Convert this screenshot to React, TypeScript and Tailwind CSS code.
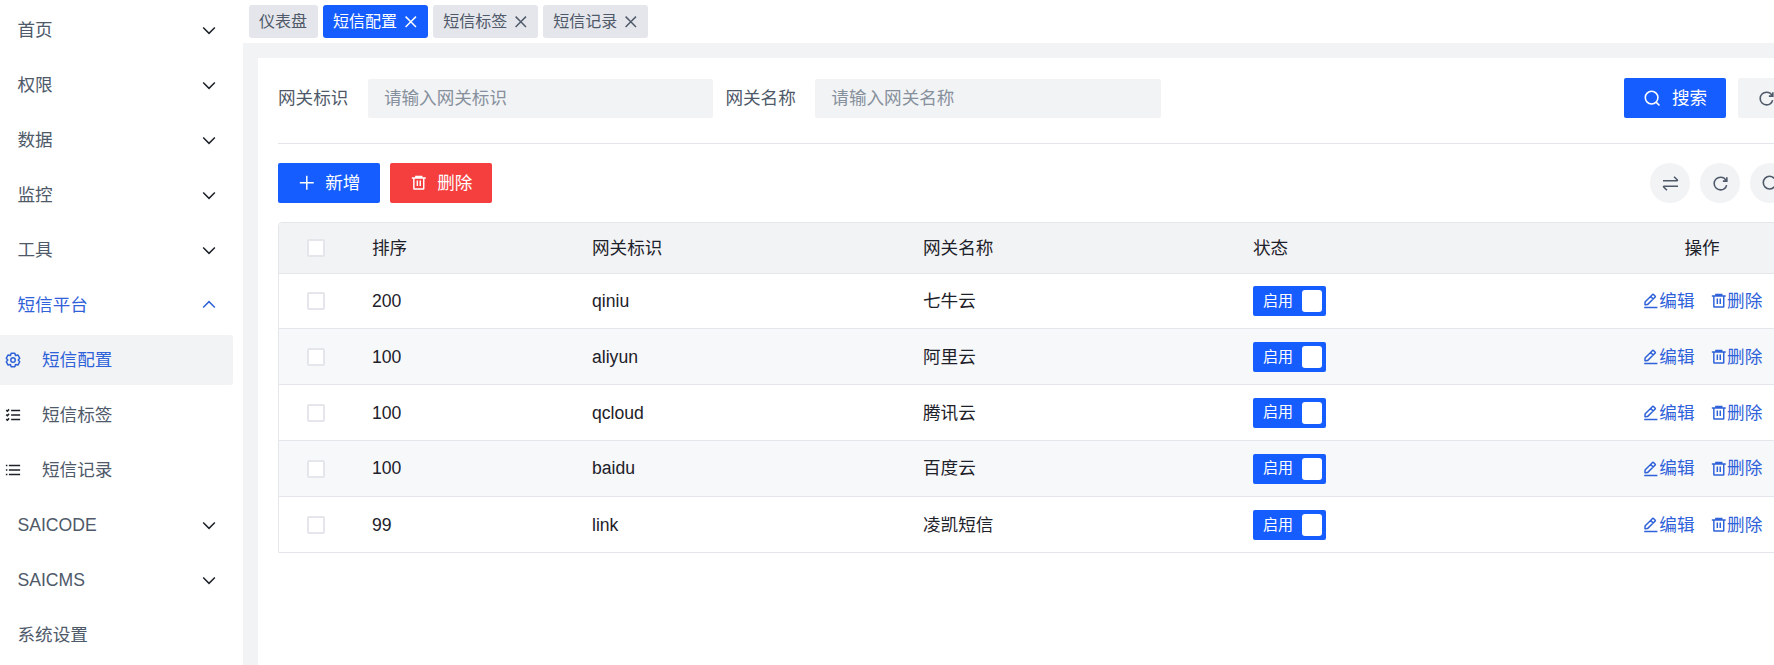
import type { ReactNode } from 'react'

const FONT = "font-['Liberation_Sans','Noto_Sans_CJK_SC',sans-serif]"

const ICONS: Record<string, ReactNode> = {
  down: <path d="M39.6 17.443 24.043 33 8.487 17.443" />,
  up: <path d="M39.6 30.557 24.043 15 8.487 30.557" />,
  close: <path d="M9.857 9.858 24 24m0 0 14.142 14.142M24 24 38.142 9.858M24 24 9.857 38.142" />,
  plus: <path d="M5 24h38M24 5v38" />,
  trash: (
    <path d="M5 11h5.5m0 0v29a1 1 0 0 0 1 1h25a1 1 0 0 0 1-1V11m-27 0H16m21.5 0H43m-5.5 0H32m-16 0V7h16v4m-16 0h16M20 18v15m8-15v15" />
  ),
  search: (
    <path d="M33.072 33.071c6.248-6.248 6.248-16.379 0-22.627-6.249-6.249-16.38-6.249-22.628 0-6.248 6.248-6.248 16.379 0 22.627 6.248 6.248 16.38 6.248 22.628 0Zm0 0 8.485 8.485" />
  ),
  refresh: (
    <path d="M38.837 18C36.463 12.136 30.715 8 24 8 15.163 8 8 15.163 8 24s7.163 16 16 16c7.455 0 13.72-5.1 15.496-12M40 8v10H30" />
  ),
  swap: (
    <path d="M5 17h35.586c.89 0 1.337-1.077.707-1.707L33 7M43 31H7.414c-.89 0-1.337 1.077-.707 1.707L15 41" />
  ),
  edit: (
    <path d="m30.48 19.038 5.733-5.734a1 1 0 0 0 0-1.414l-5.586-5.586a1 1 0 0 0-1.414 0l-5.734 5.734m7 7L15.763 33.754a1 1 0 0 1-.59.286l-6.048.708a1 1 0 0 1-1.113-1.069l.477-6.31a1 1 0 0 1 .29-.631l14.7-14.7m7 7-7-7M6 42h36" />
  ),
  settings: (
    <>
      <path d="M18.797 6.732A1 1 0 0 1 19.76 6h8.48a1 1 0 0 1 .964.732l1.285 4.628a1 1 0 0 0 1.213.7l4.651-1.2a1 1 0 0 1 1.116.468l4.24 7.344a1 1 0 0 1-.153 1.2L38.193 23.3a1 1 0 0 0 0 1.402l3.364 3.427a1 1 0 0 1 .153 1.2l-4.24 7.344a1 1 0 0 1-1.116.468l-4.65-1.2a1 1 0 0 0-1.214.7l-1.285 4.628a1 1 0 0 1-.964.732h-8.48a1 1 0 0 1-.963-.732L17.51 36.64a1 1 0 0 0-1.213-.7l-4.65 1.2a1 1 0 0 1-1.116-.468l-4.24-7.344a1 1 0 0 1 .153-1.2L9.809 24.7a1 1 0 0 0 0-1.402l-3.364-3.427a1 1 0 0 1-.153-1.2l4.24-7.344a1 1 0 0 1 1.116-.468l4.65 1.2a1 1 0 0 0 1.213-.7l1.286-4.628Z" />
      <path d="M30 24a6 6 0 1 1-12 0 6 6 0 0 1 12 0Z" />
    </>
  ),
  list: <path d="M13 24h30M5 12h4m4 24h30M13 12h30M5 24h4M5 36h4" />,
  checklist: <path d="M19 12h24M19 24h24M19 36h24M6 11l3 3 4.5-5M6 23l3 3 4.5-5M6 35l3 3 4.5-5" />,
}

function Icon({ name, className = 'size-[18px]' }: { name: string; className?: string }) {
  return (
    <svg viewBox="0 0 48 48" fill="none" stroke="currentColor" strokeWidth={4} className={`shrink-0 ${className}`}>
      {ICONS[name]}
    </svg>
  )
}

const topMenus = ['首页', '权限', '数据', '监控', '工具']
const subMenus = [
  { label: '短信配置', icon: 'settings', active: true },
  { label: '短信标签', icon: 'checklist', active: false },
  { label: '短信记录', icon: 'list', active: false },
]
const rows = [
  { sort: 200, code: 'qiniu', name: '七牛云' },
  { sort: 100, code: 'aliyun', name: '阿里云' },
  { sort: 100, code: 'qcloud', name: '腾讯云' },
  { sort: 100, code: 'baidu', name: '百度云' },
  { sort: 99, code: 'link', name: '凌凯短信' },
]

function MenuItem({ label, open, noArrow }: { label: string; open?: boolean; noArrow?: boolean }) {
  return (
    <div
      className={`flex h-[50px] items-center justify-between pr-[15px] pl-[17.5px] ${open ? 'text-[#2f62d9]' : 'text-[#4e5969]'}`}
    >
      <span>{label}</span>
      {!noArrow && <Icon name={open ? 'up' : 'down'} className={`size-[18px] ${open ? '' : 'text-[#1d2129]'}`} />}
    </div>
  )
}

function Sidebar() {
  return (
    <aside className="flex w-[243px] shrink-0 flex-col gap-[5px] bg-white pt-[5px] pr-[10px] text-[17.6px]">
      {topMenus.map((m) => (
        <MenuItem key={m} label={m} />
      ))}
      <MenuItem label="短信平台" open />
      {subMenus.map((s) => (
        <div
          key={s.label}
          className={`flex h-[50px] items-center gap-[20px] rounded-r-[3px] pl-[4px] ${
            s.active ? 'bg-[#f2f3f5] text-[#2f62d9]' : 'text-[#4e5969]'
          }`}
        >
          <Icon name={s.icon} className={`size-[18px] ${s.active ? '' : 'text-[#1d2129]'}`} />
          <span>{s.label}</span>
        </div>
      ))}
      <MenuItem label="SAICODE" />
      <MenuItem label="SAICMS" />
      <MenuItem label="系统设置" noArrow />
    </aside>
  )
}

function Tab({ label, active, closable = true }: { label: string; active?: boolean; closable?: boolean }) {
  return (
    <div
      className={`flex h-[33px] items-center gap-[4.5px] rounded-[3px] pr-[9px] pl-[10px] text-[16px] ${
        active ? 'bg-[#165dff] text-white' : 'bg-[#e5e6eb] text-[#4e5969]'
      } ${closable ? '' : 'pr-[11px]'}`}
    >
      <span>{label}</span>
      {closable && <Icon name="close" className="size-[17.6px]" />}
    </div>
  )
}

function Field({ label, placeholder }: { label: string; placeholder: string }) {
  return (
    <div className="flex items-center gap-[19.5px]">
      <span className="text-[#4e5969]">{label}</span>
      <div className="flex h-[39px] w-[345.5px] items-center rounded-[2px] bg-[#f2f3f5] pl-[16px] text-[#86909c]">
        {placeholder}
      </div>
    </div>
  )
}

function Button({
  icon,
  label,
  className,
  iconClass = 'size-[17.6px]',
}: {
  icon: string
  label: string
  className: string
  iconClass?: string
}) {
  return (
    <button className={`flex h-[40px] w-[102px] items-center justify-center gap-[10px] rounded-[2px] ${className}`}>
      <Icon name={icon} className={iconClass} />
      <span>{label}</span>
    </button>
  )
}

function RoundButton({ icon }: { icon: string }) {
  return (
    <div className="flex size-[40px] items-center justify-center rounded-full bg-[#f2f3f5] text-[#4e5969]">
      <Icon name={icon} className="size-[19px]" />
    </div>
  )
}

function Check() {
  return <div className="mx-auto size-[18px] rounded-[2px] border-2 border-[#e5e6eb] bg-white" />
}

function Table() {
  return (
    <div className="mt-[19px] w-[1541px] overflow-hidden rounded-t-[4px] border border-[#e5e6eb]">
      <table className="w-full table-fixed border-collapse text-[#1d2129]">
        <colgroup>
          <col className="w-[73px]" />
          <col className="w-[220px]" />
          <col className="w-[331px]" />
          <col className="w-[330px]" />
          <col className="w-[353px]" />
          <col />
        </colgroup>
        <thead>
          <tr className="h-[50px] bg-[#f2f3f5] text-left font-normal">
            <th className="font-normal">
              <Check />
            </th>
            <th className="pl-[20px] font-normal">排序</th>
            <th className="pl-[20px] font-normal">网关标识</th>
            <th className="pl-[20px] font-normal">网关名称</th>
            <th className="pl-[20px] font-normal">状态</th>
            <th className="text-center font-normal">操作</th>
          </tr>
        </thead>
        <tbody>
          {rows.map((r, i) => (
            <tr key={r.code} className={`h-[55.9px] border-t border-[#e5e6eb] ${i % 2 ? 'bg-[#f7f8fa]' : 'bg-white'}`}>
              <td>
                <Check />
              </td>
              <td className="pl-[20px]">{r.sort}</td>
              <td className="pl-[20px]">{r.code}</td>
              <td className="pl-[20px]">{r.name}</td>
              <td className="pl-[20px]">
                <div className="flex h-[30px] w-[73px] items-center justify-between rounded-[2px] bg-[#165dff] pr-[4.5px] pl-[10px] text-[15px] text-white">
                  <span>启用</span>
                  <span className="h-[22px] w-[20px] rounded-[3px] bg-white" />
                </div>
              </td>
              <td>
                <div className="flex justify-center gap-[15px] text-[#2f62d9]">
                  <span className="flex items-center">
                    <Icon name="edit" className="size-[17.6px]" />
                    编辑
                  </span>
                  <span className="flex items-center">
                    <Icon name="trash" className="size-[17.6px]" />
                    删除
                  </span>
                </div>
              </td>
            </tr>
          ))}
        </tbody>
      </table>
    </div>
  )
}

export default function App() {
  return (
    <div className={`flex h-[665px] w-full overflow-hidden bg-white text-[17.6px] ${FONT}`}>
      <Sidebar />
      <main className="flex w-[1617px] shrink-0 flex-col">
        <div className="flex h-[43px] shrink-0 items-start gap-[5px] bg-white pt-[5px] pl-[6px]">
          <Tab label="仪表盘" closable={false} />
          <Tab label="短信配置" active />
          <Tab label="短信标签" />
          <Tab label="短信记录" />
        </div>
        <div className="flex-1 bg-[#f2f3f5] pt-[15px] pl-[15px]">
          <div className="h-full bg-white px-[20px] pt-[20px]">
            <div className="flex items-center justify-between pb-[25px]">
              <div className="flex items-center gap-[12px]">
                <Field label="网关标识" placeholder="请输入网关标识" />
                <Field label="网关名称" placeholder="请输入网关名称" />
              </div>
              <div className="flex items-center gap-[12px]">
                <Button icon="search" label="搜索" className="bg-[#165dff] text-white" iconClass="size-[19px]" />
                <Button icon="refresh" label="重置" className="bg-[#f2f3f5] text-[#4e5969]" iconClass="size-[19px]" />
              </div>
            </div>
            <div className="border-t border-[#e5e6eb]" />
            <div className="mt-[19px] flex items-center justify-between">
              <div className="flex gap-[10px]">
                <Button icon="plus" label="新增" className="bg-[#165dff] text-white" />
                <Button icon="trash" label="删除" className="bg-[#f53f3f] text-white" />
              </div>
              <div className="flex gap-[10px]">
                <RoundButton icon="swap" />
                <RoundButton icon="refresh" />
                <RoundButton icon="search" />
                <RoundButton icon="settings" />
              </div>
            </div>
            <Table />
          </div>
        </div>
      </main>
    </div>
  )
}
